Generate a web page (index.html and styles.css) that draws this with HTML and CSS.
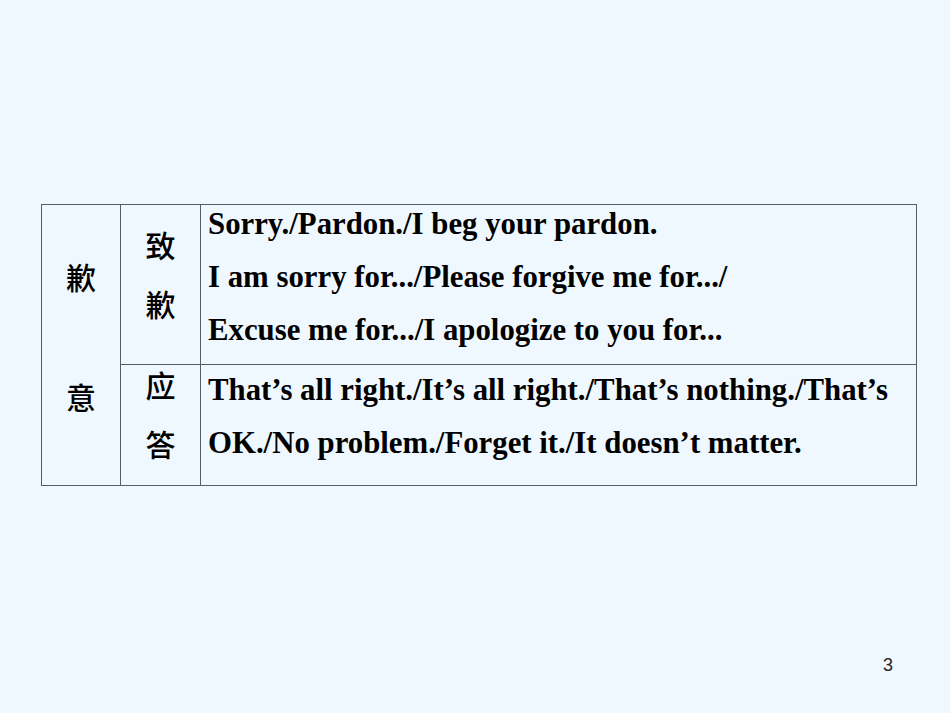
FILE: index.html
```html
<!DOCTYPE html>
<html lang="zh">
<head>
<meta charset="utf-8">
<title>Slide 3</title>
<link rel="stylesheet" href="styles.css">
</head>
<body>
<div class="slide">
  <div class="grid">
    <div class="cell cat">
      <div class="cj">歉</div>
      <div class="cj gap-big">意</div>
    </div>
    <div class="cell sub sub1">
      <div class="cj">致</div>
      <div class="cj gap">歉</div>
    </div>
    <div class="cell txt txt1">
      <div class="ln">Sorry./Pardon./I beg your pardon.</div>
      <div class="ln">I am sorry for.../Please forgive me for.../</div>
      <div class="ln">Excuse me for.../I apologize to you for...</div>
    </div>
    <div class="cell sub sub2">
      <div class="cj">应</div>
      <div class="cj gap">答</div>
    </div>
    <div class="cell txt txt2">
      <div class="ln">That’s all right./It’s all right./That’s nothing./That’s</div>
      <div class="ln">OK./No problem./Forget it./It doesn’t matter.</div>
    </div>
  </div>
  <div class="pagenum">3</div>
</div>
</body>
</html>
```
FILE: styles.css
```css
html, body {
  margin: 0;
  padding: 0;
  background: #f0f8ff;
}
.slide {
  width: 950px;
  height: 713px;
  box-sizing: border-box;
  padding-top: 204px;
  padding-left: 41px;
  overflow: hidden;
}
.grid {
  display: grid;
  width: 876px;
  box-sizing: border-box;
  padding: 1px;
  gap: 1px;
  background: #595d62;
  grid-template-columns: 78px 79px 715px;
  grid-template-rows: 159px 120px;
}
.cell {
  background: #f0f8ff;
  color: #000;
}
.cat {
  grid-row: 1 / span 2;
  grid-column: 1;
  display: flex;
  flex-direction: column;
  align-items: center;
  padding-top: 56px;
}
.sub {
  display: flex;
  flex-direction: column;
  align-items: center;
}
.sub1 { padding-top: 24px; }
.sub2 { padding-top: 4px; }
.cj {
  font-family: "Noto Sans CJK SC", sans-serif;
  font-size: 30px;
  font-weight: 500;
  line-height: 30px;
  height: 30px;
}
.gap { margin-top: 29px; }
.gap-big { margin-top: 90px; }
.txt {
  padding-left: 7px;
  font-family: "Liberation Serif", "Times New Roman", serif;
  font-weight: bold;
  font-size: 30.8px;
  display: flex;
  flex-direction: column;
  gap: 15px;
}
.ln {
  line-height: 38px;
  white-space: nowrap;
}
.txt1 { padding-top: 0; }
.txt2 { padding-top: 6px; }
.pagenum {
  margin-top: 169px;
  width: 852px;
  text-align: right;
  font-family: "Liberation Sans", Arial, sans-serif;
  font-size: 18px;
  line-height: 20px;
  color: #222;
}
```
